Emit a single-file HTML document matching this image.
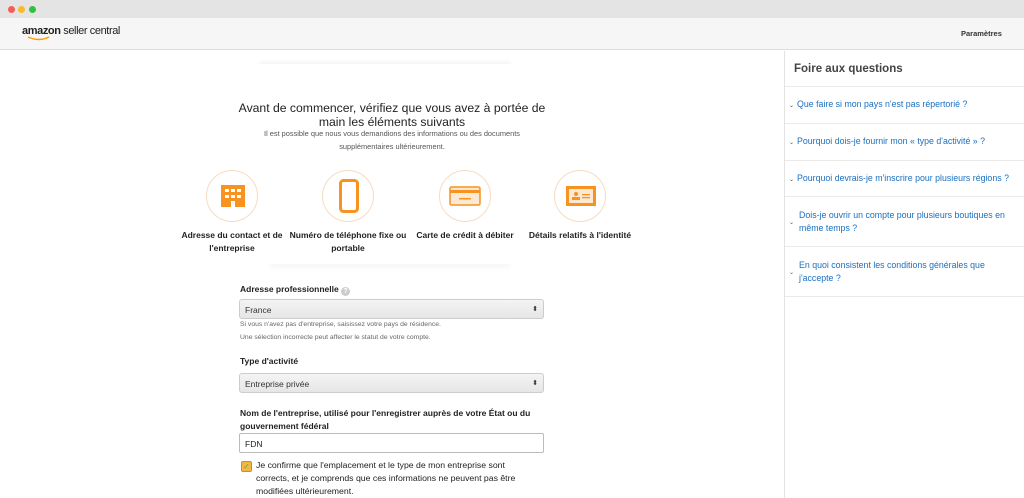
<!DOCTYPE html><html><head><meta charset="utf-8"><style>
*{margin:0;padding:0;box-sizing:border-box}
body{width:1024px;height:498px;overflow:hidden;background:#fff;font-family:"Liberation Sans",sans-serif;position:relative;color:#111}
.a{position:absolute}
.dot{position:absolute;top:6px;width:7px;height:7px;border-radius:50%}
.c{position:absolute;width:52px;height:52px;border-radius:50%;border:1px solid #f5dcc4;top:170px}
.lbl{position:absolute;top:229px;width:120px;text-align:center;font-size:8.5px;font-weight:bold;line-height:12.5px;color:#222}
.fl{position:absolute;left:240px;font-size:8.5px;font-weight:bold;color:#222}
.sel{position:absolute;left:239px;width:305px;height:20px;border:1px solid #ccc;border-radius:3px;background:linear-gradient(#f4f4f4,#e6e6e6);font-size:8.5px;padding:5px 0 0 5px;color:#333}
.sel:after{content:"⬍";position:absolute;right:5px;top:5px;font-size:7px}
.h{position:absolute;left:240px;font-size:6.8px;color:#666}
.q{position:absolute;left:789px;font-size:8.8px;color:#1a6fc0;line-height:12.5px}
.q i{font-style:normal;font-size:6px;color:#555;margin-right:3px}
.hr{position:absolute;left:785px;right:0;height:1px;background:#eaeaea}
</style></head><body>
<div class="a" style="left:0;top:0;width:1024px;height:18px;background:#e4e4e4"></div>
<div class="dot" style="left:8px;background:#f25f58"></div><div class="dot" style="left:18px;background:#f8bb2c"></div><div class="dot" style="left:29px;background:#30c140"></div>
<div class="a" style="left:0;top:18px;width:1024px;height:32px;background:#f6f6f6;border-bottom:1px solid #ddd"></div>
<div class="a" style="left:22px;top:25px;font-size:11px;color:#222;letter-spacing:-.4px"><b>amazon</b> seller central</div>
<svg class="a" style="left:27px;top:36px" width="24" height="6"><path d="M1 1 Q12 6 22 1" stroke="#f90" stroke-width="1.4" fill="none"/></svg>
<div class="a" style="left:961px;top:29px;font-size:7.5px;font-weight:bold;color:#333">Paramètres</div>
<div class="a" style="left:784px;top:51px;width:1px;height:447px;background:#e3e3e3"></div>
<div class="a" style="left:260px;top:64px;width:250px;height:4px;box-shadow:0 -2px 4px rgba(0,0,0,.06)"></div>
<div class="a" style="left:200px;top:101px;width:384px;text-align:center;font-size:12.2px;line-height:14px;color:#222">Avant de commencer, vérifiez que vous avez à portée de<br>main les éléments suivants</div>
<div class="a" style="left:200px;top:128px;width:384px;text-align:center;font-size:7.4px;line-height:12.5px;color:#555">Il est possible que nous vous demandions des informations ou des documents<br>supplémentaires ultérieurement.</div>
<div class="c" style="left:206px"></div><div class="c" style="left:322px"></div><div class="c" style="left:439px"></div><div class="c" style="left:554px"></div>
<svg class="a" style="left:220px;top:184px" width="26" height="24"><rect x="1" y="1" width="24" height="22" fill="#f7931e"/><g fill="#fff"><rect x="5" y="5" width="4" height="3"/><rect x="11" y="5" width="4" height="3"/><rect x="17" y="5" width="4" height="3"/><rect x="5" y="11" width="4" height="3"/><rect x="11" y="11" width="4" height="3"/><rect x="17" y="11" width="4" height="3"/><rect x="11" y="17" width="4" height="6"/></g></svg>
<svg class="a" style="left:339px;top:179px" width="20" height="34"><rect x="1.5" y="1.5" width="17" height="31" rx="3" fill="none" stroke="#f7931e" stroke-width="3"/><rect x="4" y="4" width="12" height="24" fill="#fff"/><circle cx="10" cy="30" r="1" fill="#fff"/></svg>
<svg class="a" style="left:449px;top:186px" width="32" height="20"><rect x="1" y="1" width="30" height="18" rx="1.5" fill="#fde9d3" stroke="#f7931e" stroke-width="1.5"/><rect x="1" y="4" width="30" height="3" fill="#f7931e"/><rect x="10" y="12" width="12" height="1.5" fill="#f7931e"/></svg>
<svg class="a" style="left:565px;top:185px" width="32" height="22"><rect x="1" y="1" width="30" height="20" fill="#f7931e"/><rect x="4" y="4" width="24" height="14" fill="#fde9d3"/><circle cx="11" cy="9" r="2" fill="#f7931e"/><rect x="7" y="12" width="8" height="3" fill="#f7931e"/><rect x="17" y="9" width="8" height="1.3" fill="#f7931e"/><rect x="17" y="12" width="8" height="1.3" fill="#f7931e"/></svg>
<div class="lbl" style="left:172px">Adresse du contact et de l'entreprise</div>
<div class="lbl" style="left:288px">Numéro de téléphone fixe ou portable</div>
<div class="lbl" style="left:405px">Carte de crédit à débiter</div>
<div class="lbl" style="left:520px">Détails relatifs à l'identité</div>
<div class="a" style="left:270px;top:260px;width:240px;height:4px;box-shadow:0 3px 5px rgba(0,0,0,.05)"></div>
<div class="fl" style="top:284px">Adresse professionnelle <span style="display:inline-block;width:9px;height:9px;border-radius:50%;background:#ccc;color:#fff;font-size:7px;text-align:center;line-height:9px;vertical-align:-1px">?</span></div>
<div class="sel" style="top:299px">France</div>
<div class="h" style="top:321px">Si vous n'avez pas d'entreprise, saisissez votre pays de résidence.</div>
<div class="h" style="top:334px">Une sélection incorrecte peut affecter le statut de votre compte.</div>
<div class="fl" style="top:356px">Type d'activité</div>
<div class="sel" style="top:373px">Entreprise privée</div>
<div class="fl" style="top:407px;line-height:13px;width:310px">Nom de l'entreprise, utilisé pour l'enregistrer auprès de votre État ou du gouvernement fédéral</div>
<div class="a" style="left:239px;top:433px;width:305px;height:20px;border:1px solid #bbb;border-radius:2px;font-size:8.5px;padding:5px 0 0 5px;color:#222">FDN</div>
<div class="a" style="left:241px;top:461px;width:11px;height:11px;border-radius:2px;background:#f4b73d;border:1px solid #c8902a;color:#4a7;font-size:8px;text-align:center;line-height:10px">✓</div>
<div class="a" style="left:256px;top:459px;width:272px;font-size:8.7px;line-height:13px;color:#222">Je confirme que l'emplacement et le type de mon entreprise sont corrects, et je comprends que ces informations ne peuvent pas être modifiées ultérieurement.</div>
<div class="a" style="left:794px;top:63px;font-size:11.5px;font-weight:bold;color:#444">Foire aux questions</div>
<div class="hr" style="top:86px"></div><div class="hr" style="top:123px"></div><div class="hr" style="top:160px"></div><div class="hr" style="top:196px"></div><div class="hr" style="top:246px"></div><div class="hr" style="top:296px"></div>
<div class="q" style="top:98px"><i>⌄</i>Que faire si mon pays n'est pas répertorié ?</div>
<div class="q" style="top:135px"><i>⌄</i>Pourquoi dois-je fournir mon « type d'activité » ?</div>
<div class="q" style="top:172px"><i>⌄</i>Pourquoi devrais-je m'inscrire pour plusieurs régions ?</div>
<div class="q" style="top:209px;left:799px;width:215px">Dois-je ouvrir un compte pour plusieurs boutiques en même temps ?</div><div class="q" style="top:215px"><i>⌄</i></div>
<div class="q" style="top:259px;left:799px;width:195px">En quoi consistent les conditions générales que j'accepte ?</div><div class="q" style="top:265px"><i>⌄</i></div>
</body></html>
